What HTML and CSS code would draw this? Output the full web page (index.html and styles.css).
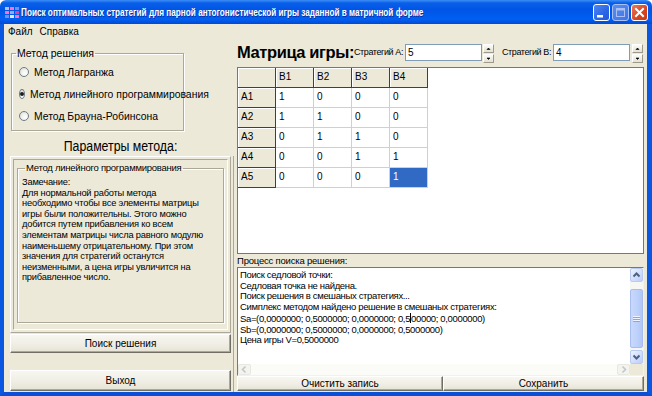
FILE: index.html
```html
<!DOCTYPE html>
<html lang="ru">
<head>
<meta charset="utf-8">
<title>Поиск оптимальных стратегий</title>
<link rel="stylesheet" href="styles.css">
</head>
<body>
<div class="window">
  <div class="titlebar">
    <svg class="appicon" width="14" height="14" viewBox="0 0 14 14">
      <rect x="0" y="2" width="4" height="3" fill="#b0c0ff"/>
      <rect x="5" y="2" width="4" height="3" fill="#ff70c8"/>
      <rect x="10" y="2" width="4" height="3" fill="#7090ff"/>
      <rect x="0" y="6" width="4" height="3" fill="#ff70c8"/>
      <rect x="5" y="6" width="4" height="3" fill="#90a8ff"/>
      <rect x="10" y="6" width="4" height="3" fill="#e040a0"/>
      <rect x="0" y="10" width="4" height="3" fill="#7090ff"/>
      <rect x="5" y="10" width="4" height="3" fill="#e0e8ff"/>
      <rect x="10" y="10" width="4" height="3" fill="#ff70c8"/>
    </svg>
    <span class="title">Поиск оптимальных стратегий для парной антогонистической игры заданной в матричной форме</span>
    <div class="wbtns">
      <span class="wbtn wmin"><svg width="15" height="15" viewBox="0 0 15 15"><rect x="3" y="10" width="6" height="2.5" fill="#fff"/></svg></span>
      <span class="wbtn wmax"><svg width="15" height="15" viewBox="0 0 15 15"><rect x="3.5" y="3.5" width="8" height="8" fill="none" stroke="#a8c0f4" stroke-width="1"/><rect x="3.5" y="3.5" width="8" height="2" fill="#a8c0f4"/></svg></span>
      <span class="wbtn wclose"><svg width="15" height="15" viewBox="0 0 15 15"><path d="M4 4 L11 11 M11 4 L4 11" stroke="#fff" stroke-width="2" stroke-linecap="square"/></svg></span>
    </div>
  </div>
  <div class="frame">
    <div class="menubar"><span class="menuitem">Файл</span><span class="menuitem">Справка</span></div>
    <div class="client">
      <div class="left">
        <fieldset class="group method">
          <legend>Метод решения</legend>
          <div class="radio"><span class="rb"></span>Метод Лагранжа</div>
          <div class="radio"><span class="rb on"></span>Метод линейного программирования</div>
          <div class="radio"><span class="rb"></span>Метод Брауна-Робинсона</div>
        </fieldset>
        <div class="params-title"><span class="pt-text">Параметры метода:</span></div>
        <div class="lower">
          <div class="panel">
            <div class="panel-inner">
              <fieldset class="group lp">
                <legend>Метод линейного программирования</legend>
                <p class="note">Замечание:<br>Для нормальной работы метода<br>необходимо чтобы все элементы матрицы<br>игры были положительны. Этого можно<br>добится путем прибавления ко всем<br>элементам матрицы числа равного модулю<br>наименьшему отрицательному. При этом<br>значения для стратегий останутся<br>неизменными, а цена игры увличится на<br>прибавленное число.</p>
              </fieldset>
            </div>
          </div>
          <div class="btn search">Поиск решения</div>
          <div class="btn exit">Выход</div>
        </div>
      </div>
      <div class="right">
        <div class="matrix-head">
          <span class="mtitle">Матрица игры:</span>
          <span class="slabel">Стратегий А:</span>
          <span class="input">5</span>
          <span class="spin"><span class="sbtn"><svg width="9" height="7" viewBox="0 0 9 7"><path d="M3 4.5 H6 L4.5 3 Z" fill="#000" stroke="#000" stroke-width="0.6"/></svg></span><span class="sbtn"><svg width="9" height="7" viewBox="0 0 9 7"><path d="M3 3 H6 L4.5 4.5 Z" fill="#000" stroke="#000" stroke-width="0.6"/></svg></span></span>
          <span class="slabel lb">Стратегий В:</span>
          <span class="input">4</span>
          <span class="spin sb"><span class="sbtn"><svg width="9" height="7" viewBox="0 0 9 7"><path d="M3 4.5 H6 L4.5 3 Z" fill="#000" stroke="#000" stroke-width="0.6"/></svg></span><span class="sbtn"><svg width="9" height="7" viewBox="0 0 9 7"><path d="M3 3 H6 L4.5 4.5 Z" fill="#000" stroke="#000" stroke-width="0.6"/></svg></span></span>
        </div>
        <div class="grid-box">
          <table class="grid">
            <tr><td class="fx"></td><td class="fx">B1</td><td class="fx">B2</td><td class="fx">B3</td><td class="fx">B4</td></tr>
            <tr><td class="fx">A1</td><td>1</td><td>0</td><td>0</td><td>0</td></tr>
            <tr><td class="fx">A2</td><td>1</td><td>1</td><td>0</td><td>0</td></tr>
            <tr><td class="fx">A3</td><td>0</td><td>1</td><td>1</td><td>0</td></tr>
            <tr><td class="fx">A4</td><td>0</td><td>0</td><td>1</td><td>1</td></tr>
            <tr><td class="fx">A5</td><td>0</td><td>0</td><td>0</td><td class="sel">1</td></tr>
          </table>
        </div>
        <div class="proc-label">Процесс поиска решения:</div>
        <div class="memo">
          <div class="memo-main">
            <div class="memo-text">Поиск седловой точки:<br>Седловая точка не найдена.<br>Поиск решения в смешаных стратегиях...<br>Симплекс методом найдено решение в смешаных стратегиях:<br>Sa=(0,0000000; 0,5000000; 0,0000000; 0,5<span class="caret"></span>00000; 0,0000000)<br>Sb=(0,0000000; 0,5000000; 0,0000000; 0,5000000)<br>Цена игры V=0,5000000</div>
            <div class="vscroll">
              <span class="sarrow"><svg width="11" height="12" viewBox="0 0 11 12"><path d="M2.5 7.5 L5.5 4.5 L8.5 7.5" fill="none" stroke="#4d6185" stroke-width="2"/></svg></span>
              <div class="vtrack"><span class="thumb"><svg width="7" height="8" viewBox="0 0 7 8"><path d="M0 1.5 H7 M0 3.5 H7 M0 5.5 H7" stroke="#eef3ff" stroke-width="1"/><path d="M0 2.5 H7 M0 4.5 H7 M0 6.5 H7" stroke="#8ca5e6" stroke-width="1"/></svg></span></div>
              <span class="sarrow"><svg width="11" height="12" viewBox="0 0 11 12"><path d="M2.5 4.5 L5.5 7.5 L8.5 4.5" fill="none" stroke="#4d6185" stroke-width="2"/></svg></span>
            </div>
          </div>
          <div class="hscroll">
            <span class="harrow"><svg width="11" height="9" viewBox="0 0 11 9"><path d="M6.5 1.5 L3.5 4.5 L6.5 7.5" fill="none" stroke="#c3c6cc" stroke-width="1.6"/></svg></span>
            <span class="htrack"></span>
            <span class="harrow"><svg width="11" height="9" viewBox="0 0 11 9"><path d="M4.5 1.5 L7.5 4.5 L4.5 7.5" fill="none" stroke="#c3c6cc" stroke-width="1.6"/></svg></span>
            <span class="corner"></span>
          </div>
        </div>
        <div class="btnrow">
          <div class="btn clear">Очистить запись</div>
          <div class="btn save">Сохранить</div>
        </div>
      </div>
    </div>
  </div>
</div>
</body>
</html>
```

FILE: styles.css
```css
* { box-sizing: border-box; }
html, body { margin: 0; padding: 0; }
body {
  width: 652px;
  height: 396px;
  overflow: hidden;
  background: #ffffff;
  font-family: "Liberation Sans", Arial, sans-serif;
  font-size: 11px;
  color: #000;
}
.window {
  width: 652px;
  height: 396px;
  display: flex;
  flex-direction: column;
}
.titlebar {
  height: 24px;
  flex: none;
  display: flex;
  align-items: center;
  padding: 0 4px 0 5px;
  color: #fff;
  border-radius: 6px 6px 0 0;
  background: linear-gradient(180deg, #3d8ef8 0px, #0a5fe9 3px, #0055e5 40%, #005ff2 80%, #0049d4 100%);
}
.appicon { flex: none; margin-right: 2px; }
.title {
  display: inline-block;
  font-weight: bold;
  font-size: 11px;
  white-space: nowrap;
  transform: scaleX(0.745);
  transform-origin: left center;
  text-shadow: 1px 1px 0 #0b2fa0;
}
.wbtns {
  margin-left: auto;
  display: flex;
  gap: 2px;
}
.wbtn {
  width: 17px;
  height: 17px;
  border: 1px solid #fff;
  border-radius: 3px;
  display: flex;
  align-items: center;
  justify-content: center;
}
.wmin { background: linear-gradient(135deg, #4f86f5 0%, #2a65e5 60%, #2058d8 100%); }
.wmax { background: linear-gradient(135deg, #5c8ef0 0%, #3d74e6 100%); border-color: #a8c0f4; }
.wclose { background: linear-gradient(135deg, #e87a5c 0%, #d6451f 60%, #c43a16 100%); }

.frame {
  flex: 1;
  display: flex;
  flex-direction: column;
  background: #ece9d8;
  border-left: 4px solid #0a57e2;
  border-right: 5px solid #0a57e2;
  border-bottom: 4px solid #0a4fd6;
}
.menubar {
  height: 14px;
  flex: none;
  display: flex;
  align-items: center;
  padding-left: 4px;
  gap: 7px;
  font-size: 10px;
}
.client {
  flex: 1;
  display: flex;
}
.left {
  width: 230px;
  flex: none;
  display: flex;
  flex-direction: column;
}
.group {
  margin: 0;
  border: 1px solid #aca899;
  box-shadow: 1px 1px 0 #fff, inset 1px 1px 0 #fff;
  min-width: 0;
}
.group legend {
  padding: 0 1px;
  font-size: 10.5px;
  line-height: 12px;
  height: 12px;
  white-space: nowrap;
}
.method {
  margin: 9px 0 0 7px;
  width: 173px;
  height: 84px;
  padding: 2px 0 0 0;
}
.method legend { margin-left: 4px; }
.radio {
  height: 22px;
  display: flex;
  align-items: center;
  gap: 5px;
  margin-left: 7px;
  font-size: 10.4px;
  white-space: nowrap;
}
.rb {
  width: 10px;
  height: 10px;
  border-radius: 50%;
  border: 1px solid #6c7c8c;
  background: radial-gradient(circle at 65% 65%, #fff 0%, #f4f4ee 40%, #d8d6cc 100%);
  display: flex;
  align-items: center;
  justify-content: center;
}
.rb.on::after {
  content: "";
  width: 4px;
  height: 4px;
  border-radius: 50%;
  background: #1e1e1e;
}
.params-title {
  margin-top: 7px;
  height: 17px;
  line-height: 17px;
  font-size: 14px;
  text-align: center;
  padding-left: 4px;
  white-space: nowrap;
}
.pt-text {
  display: inline-block;
  transform: scaleX(0.88);
  transform-origin: center;
}
.lower {
  margin-top: 1px;
  flex: 1;
  display: flex;
  flex-direction: column;
  border-right: 1px solid #aca899;
}
.panel {
  margin-left: 6px;
  width: 221px;
  height: 177px;
  border: 1px solid;
  border-color: #fff #aca899 #aca899 #fff;
  padding: 2px;
}
.panel-inner {
  height: 100%;
  border: 1px solid;
  border-color: #aca899 #fff #fff #aca899;
  padding: 2px 0 0 3px;
}
.lp {
  width: 207px;
  height: 161px;
  padding: 3px 0 0 4px;
}
.lp legend { margin-left: 3px; font-size: 9.5px; letter-spacing: -0.25px; }
.note {
  margin: 0;
  font-size: 9.3px;
  letter-spacing: -0.2px;
  line-height: 10.6px;
  white-space: nowrap;
}
.btn {
  display: flex;
  align-items: center;
  justify-content: center;
  font-size: 10px;
  background: linear-gradient(180deg, #f7f6f0 0%, #efede3 60%, #e6e3d4 100%);
  border: 1px solid;
  border-color: #fff #716f64 #716f64 #fff;
  box-shadow: inset -1px -1px 0 #aca899;
  white-space: nowrap;
}
.search {
  margin: 1px 0 0 6px;
  width: 221px;
  height: 19px;
}
.exit {
  margin: 17px 0 0 6px;
  width: 221px;
  height: 21px;
}

.right {
  width: 413px;
  flex: none;
  padding: 0 3px 0 3px;
  display: flex;
  flex-direction: column;
}
.matrix-head {
  margin-top: 5px;
  height: 18px;
  display: flex;
  align-items: center;
  flex: none;
}
.mtitle {
  width: 116px;
  font-size: 16.5px;
  font-weight: bold;
  line-height: 18px;
  letter-spacing: -0.4px;
  white-space: nowrap;
}
.slabel {
  margin-left: 1px;
  width: 51px;
  font-size: 9px;
  letter-spacing: -0.4px;
  white-space: nowrap;
}
.slabel.lb { margin-left: 8px; }
.input {
  width: 77px;
  height: 17px;
  background: #fff;
  border: 1px solid #7f9db9;
  font-size: 10px;
  line-height: 15px;
  padding-left: 2px;
}
.spin {
  margin-left: 1px;
  width: 11px;
  height: 17px;
  display: flex;
  flex-direction: column;
  gap: 1px;
}
.spin.sb { margin-left: 2px; }
.sbtn {
  flex: 1;
  display: flex;
  align-items: center;
  justify-content: center;
  background: linear-gradient(180deg, #fbfbf7, #e4e1d3);
  border: 1px solid;
  border-color: #fff #9d9a8c #9d9a8c #fff;
}
.sbtn svg { display: block; }
.grid-box {
  margin-top: 6px;
  height: 187px;
  width: 407px;
  flex: none;
  background: #fff;
  border: 1px solid #7a786c;
}
.grid {
  border-collapse: separate;
  border-spacing: 0;
  font-size: 10px;
}
.grid td {
  width: 38px;
  height: 20px;
  padding: 3px 0 0 3px;
  vertical-align: top;
  border-right: 1px solid #d4d0c8;
  border-bottom: 1px solid #d4d0c8;
  background: #fff;
}
.grid td.fx {
  background: #ece9d8;
  border-right: 1px solid #403f3a;
  border-bottom: 1px solid #403f3a;
  box-shadow: inset 1px 1px 0 #fff;
}
.grid td.sel {
  background: #316ac5;
  color: #fff;
}
.proc-label {
  height: 13px;
  line-height: 13px;
  font-size: 9.5px;
  letter-spacing: -0.2px;
  flex: none;
}
.memo {
  height: 109px;
  width: 407px;
  flex: none;
  border: 1px solid;
  border-color: #7a786c #f4f2e8 #f4f2e8 #7a786c;
  background: #fff;
  display: flex;
  flex-direction: column;
}
.memo-main {
  flex: 1;
  display: flex;
  min-height: 0;
}
.memo-text {
  flex: 1;
  padding: 2px 2px 0 2px;
  font-size: 9.5px;
  letter-spacing: -0.35px;
  line-height: 10.7px;
  white-space: nowrap;
  overflow: hidden;
}
.caret {
  display: inline-block;
  width: 1px;
  height: 10px;
  background: #000;
  vertical-align: -1px;
}
.vscroll {
  width: 13px;
  flex: none;
  display: flex;
  flex-direction: column;
  background: #f6f6f2;
}
.sarrow {
  height: 14px;
  flex: none;
  display: flex;
  align-items: center;
  justify-content: center;
  border: 1px solid #b8cbf5;
  border-radius: 2px;
  background: linear-gradient(135deg, #eef3ff 0%, #cfdcfc 60%, #bccdf8 100%);
}
.vtrack {
  flex: 1;
  display: flex;
  flex-direction: column;
  padding: 7px 0 2px 0;
}
.thumb {
  height: 59px;
  border: 1px solid #a7bcf0;
  border-radius: 2px;
  background: linear-gradient(90deg, #cad8fb 0%, #bcd0fb 60%, #b2c6f6 100%);
  display: flex;
  align-items: center;
  justify-content: center;
}
.hscroll {
  height: 11px;
  flex: none;
  display: flex;
  background: #fbfbf8;
}
.harrow {
  width: 13px;
  flex: none;
  display: flex;
  align-items: center;
  justify-content: center;
  border: 1px solid #e8e8e2;
  border-radius: 2px;
  background: #f4f4ef;
}
.htrack { flex: 1; }
.corner {
  width: 13px;
  flex: none;
  background: #ece9d8;
}
.btnrow {
  height: 15px;
  display: flex;
  flex: none;
}
.clear { width: 206px; height: 15px; }
.save { width: 201px; height: 15px; }
```
